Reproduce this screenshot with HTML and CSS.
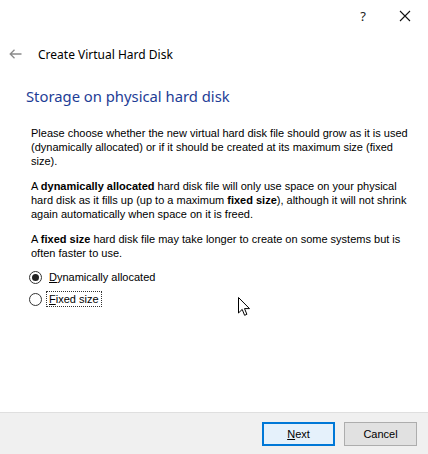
FILE: index.html
```html
<!DOCTYPE html>
<html>
<head>
<meta charset="utf-8">
<link rel="stylesheet" href="styles.css">
</head>
<body>
<div class="window">
  <div class="titlebar">
    <span class="help">?</span>
    <span class="close">
      <svg width="12" height="12" viewBox="0 0 12 12"><path d="M1 1 L11 11 M11 1 L1 11" stroke="#111" stroke-width="1.1" fill="none"/></svg>
    </span>
  </div>
  <div class="header">
    <svg class="back" width="13" height="10" viewBox="0 0 13 10"><path d="M1 5 H12.5 M5.5 0.8 L1.2 5 L5.5 9.2" stroke="#8a8a8a" stroke-width="1.3" fill="none"/></svg>
    <span class="wiztitle">Create Virtual Hard Disk</span>
  </div>
  <div class="content">
    <h1 class="heading">Storage on physical hard disk</h1>
    <p class="para">Please choose whether the new virtual hard disk file should grow as it is used<br>(dynamically allocated) or if it should be created at its maximum size (fixed<br>size).</p>
    <p class="para">A <b>dynamically allocated</b> hard disk file will only use space on your physical<br>hard disk as it fills up (up to a maximum <b>fixed size</b>), although it will not shrink<br>again automatically when space on it is freed.</p>
    <p class="para last">A <b>fixed size</b> hard disk file may take longer to create on some systems but is<br>often faster to use.</p>
    <div class="options">
      <label class="radio"><span class="dot checked"></span><span class="lbl"><u>D</u>ynamically allocated</span></label>
      <label class="radio"><span class="dot"></span><span class="lbl focus"><u>F</u>ixed size</span></label>
    </div>
  </div>
  <div class="footer">
    <button class="btn primary"><u>N</u>ext</button>
    <button class="btn">Cancel</button>
  </div>
  <svg class="cursor" width="13" height="20" viewBox="0 0 13 20"><path d="M0.5 0.5 V16 L4.2 12.4 L6.6 18.3 L8.9 17.3 L6.5 11.6 L11.5 11.6 Z" fill="#fff" stroke="#000" stroke-width="1"/></svg>
</div>
</body>
</html>
```

FILE: styles.css
```css
* { box-sizing: border-box; }
html, body { margin: 0; padding: 0; background: #fff; }
.window {
  position: relative;
  width: 428px;
  height: 454px;
  display: flex;
  flex-direction: column;
  background: #fff;
  font-family: "Liberation Sans", Arial, sans-serif;
  color: #000;
}
.titlebar {
  height: 32px;
  display: flex;
  justify-content: flex-end;
  align-items: center;
  padding-right: 17px;
  gap: 33px;
}
.help { font-family: "Noto Sans", sans-serif; font-size: 13px; color: #222; }
.close { display: flex; }
.header {
  display: flex;
  align-items: center;
  height: 44px;
  padding-left: 9px;
  padding-top: 1px;
  padding-bottom: 1px;
}
.back { margin-right: 16px; }
.wiztitle { font-family: "Noto Sans", sans-serif; font-size: 12px; color: #000; }
.content { padding: 0 31px; flex: 1; }
.heading {
  margin: 10px 0 20px -5px;
  font-family: "Noto Sans", sans-serif;
  font-weight: normal;
  font-size: 14.8px;
  color: #1e3d96;
  line-height: 20px;
}
.para {
  margin: 0 0 11px;
  font-size: 11px;
  line-height: 14px;
  white-space: nowrap;
}
.para.last { margin-bottom: 9px; }
.options { display: flex; flex-direction: column; gap: 6px; }
.radio { display: flex; align-items: center; font-size: 11px; height: 16px; margin-left: -2px; }
.dot {
  width: 13px; height: 13px; border-radius: 50%;
  border: 1px solid #333; background: #fff;
  margin-right: 4px;
  display: flex; align-items: center; justify-content: center;
}
.dot.checked::after { content: ""; width: 7px; height: 7px; border-radius: 50%; background: #222; }
.lbl { padding: 1px 2px; border: 1px dotted transparent; }
.lbl.focus { border-color: #333; }
.footer {
  height: 42px;
  background: #f0f0f0;
  border-top: 1px solid #dfdfdf;
  display: flex;
  justify-content: flex-end;
  align-items: center;
  gap: 9px;
  padding-right: 11px;
}
.btn {
  width: 73px; height: 24px;
  background: #e1e1e1;
  border: 1px solid #adadad;
  font-family: "Liberation Sans", Arial, sans-serif;
  font-size: 11px;
  color: #000;
  padding: 0;
}
.btn.primary { border: 2px solid #0078d7; background: #e5f1fb; }
.cursor { position: absolute; left: 238px; top: 297px; }
```
